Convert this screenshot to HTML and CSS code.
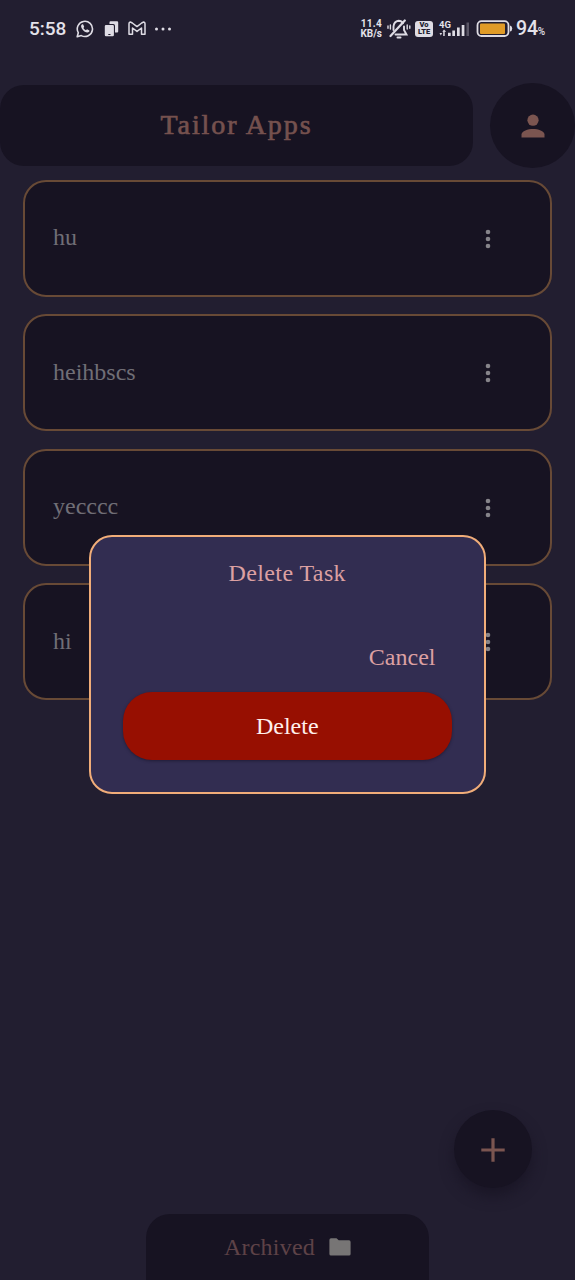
FILE: index.html
```html
<!DOCTYPE html>
<html lang="en">
<head>
<meta charset="utf-8">
<title>Tailor Apps</title>
<link rel="stylesheet" href="styles.css">
</head>
<body>
<div class="app">
  <div class="status">
    <span class="clock">5:58</span>
    <svg class="ic-whatsapp" width="18" height="18" viewBox="0 0 18 18" fill="none" stroke="#dedce4"><path d="M1.200 16.800l1.100-4.100a7.600 7.600 0 1 1 3 2.900z" stroke-width="1.600" stroke-linejoin="round"/><path d="M6.100 4.300c-1.700 1-1.100 3.400.4 5.200 1.700 2.100 4.500 4 6.300 2.600.9-.7.8-1.500.2-1.800l-1.600-.9c-.9-.2-1 .8-1.600.8-1-.3-1.900-1.200-2.300-2.100 0-.5.800-.8.600-1.500L7.200 4.600c-.2-.4-.6-.5-1.100-.3z" fill="#dedce4" stroke="none"/></svg>
    <svg class="ic-devices" width="15" height="16" viewBox="0 0 15 16" fill="#dedce4"><path d="M5.500 1.200Q5.500.2 6.500.2H13q1.200 0 1.200 1.200V10.500q0 1-1 1H11V4.800Q11 3 9.300 3H5.500z"/><path d="M2 4h6.800q1.100 0 1.100 1.100v9q0 1.200-1.200 1.200H2q-1.200 0-1.200-1.200V5.200Q.8 4 2 4zm2.300 9.100v1h2.200v-1z" fill-rule="evenodd"/></svg>
    <svg class="ic-mail" width="18" height="15" viewBox="0 0 18 15" fill="none" stroke="#dedce4" stroke-width="1.500" stroke-linejoin="round"><path d="M1 13.300V3q0-2 1.700-1.900L4.300 2 9 5.600 13.700 2l1.600-.9Q17 1 17 3v10.300h-3.500V7L9 10.400 4.500 7v6.300z"/></svg>
    <svg class="ic-more" width="18" height="4" viewBox="0 0 18 4" fill="#dedce4"><circle cx="2.500" cy="2" r="1.500"/><circle cx="9" cy="2" r="1.500"/><circle cx="15.500" cy="2" r="1.500"/></svg>
    <span class="spacer"></span>
    <span class="speed"><span>11.4</span><span>KB/s</span></span>
    <svg class="ic-mute" width="24" height="20" viewBox="0 0 24 20" fill="none" stroke="#dedce4" stroke-width="1.900" stroke-linecap="round"><path d="M6.500 11V7.500Q7 2.500 11.500 1.800q3.200 0 4.500 2.400M17 7.500v3.500l2.500 4.500H8.500"/><path d="M3.500 17L17.800 1.500" stroke-width="2.200"/><path d="M10.500 18.500h3" stroke-width="2"/><path d="M3.400 6v4M1 7v2.200M20.200 6v4M22.800 7v2.200" stroke-width="1.400"/></svg>
    <span class="volte"><span>Vo</span><span>LTE</span></span>
    <span class="signal"><span class="net">4G</span>
      <svg width="31" height="16" viewBox="0 0 31 16" fill="#dedce4"><path d="M.5 12h2.600l-1.300 2.500zM3.300 10.800l1.700-2.300 2.200 2.300H5.700V15H4.200v-4.200zM9 11.700h2.700V15H9zM13.300 9.500H16V15h-2.700zM18 6.500h2.700V15H18zM22.700 4h2.700v11h-2.700z"/><path d="M27.500 1.500h2.500V15h-2.500z" opacity=".3"/></svg>
    </span>
    <svg class="ic-battery" width="37" height="18" viewBox="0 0 37 18"><rect x="1.500" y="1.200" width="31" height="14.800" rx="4" fill="none" stroke="#dedce4" stroke-width="1.800"/><rect x="4" y="3.400" width="25" height="10.500" rx="1" fill="#e09b27"/><path d="M34 5.500q2.200.4 2.200 3T34 11.500z" fill="#dedce4"/></svg>
    <span class="percent">94<small>%</small></span>
  </div>

  <div class="header">
    <div class="title">Tailor Apps</div>
    <div class="profile"><svg width="24" height="24" viewBox="0 0 24 24" fill="#7b5550"><circle cx="12" cy="6.200" r="5.600"/><path d="M.5 23.500v-2.900C.5 17 7 15 12 15s11.500 2 11.500 5.600v2.900z"/></svg></div>
  </div>

  <div class="tasks">
    <div class="task"><span>hu</span><svg class="dots" width="6" height="20" viewBox="0 0 6 20"><circle cx="3" cy="3" r="2.300"/><circle cx="3" cy="10" r="2.300"/><circle cx="3" cy="17" r="2.300"/></svg></div>
    <div class="task"><span>heihbscs</span><svg class="dots" width="6" height="20" viewBox="0 0 6 20"><circle cx="3" cy="3" r="2.300"/><circle cx="3" cy="10" r="2.300"/><circle cx="3" cy="17" r="2.300"/></svg></div>
    <div class="task"><span>yecccc</span><svg class="dots" width="6" height="20" viewBox="0 0 6 20"><circle cx="3" cy="3" r="2.300"/><circle cx="3" cy="10" r="2.300"/><circle cx="3" cy="17" r="2.300"/></svg></div>
    <div class="task"><span>hi</span><svg class="dots" width="6" height="20" viewBox="0 0 6 20"><circle cx="3" cy="3" r="2.300"/><circle cx="3" cy="10" r="2.300"/><circle cx="3" cy="17" r="2.300"/></svg></div>
  </div>

  <div class="archived"><span>Archived</span><svg width="22" height="18" viewBox="0 0 22 18" fill="#777575"><path d="M2 .3h5.500L9.700 2.300H20q1.600 0 1.600 1.600V16q0 1.500-1.600 1.500H2Q.4 17.500.4 16V1.900Q.4.300 2 .3z"/></svg></div>

  <div class="fab"><svg width="24" height="24" viewBox="0 0 24 24" stroke="#7b5550" stroke-width="3.200"><path d="M12 .3v23.400M.3 12h23.400"/></svg></div>

  <div class="dialog">
    <div class="dialog-title">Delete Task</div>
    <div class="cancel">Cancel</div>
    <div class="delete">Delete</div>
  </div>
</div>
</body>
</html>
```
FILE: styles.css
```css
* { box-sizing: border-box; }
body { margin: 0; background: #221e30; }
svg { display: block; flex: none; }
.app {
  position: relative;
  display: flex;
  flex-direction: column;
  width: 575px;
  height: 1280px;
  overflow: hidden;
  background: #221e30;
  font-family: "Liberation Serif", serif;
  font-size: 24px;
  line-height: 28px;
}
.status {
  display: flex;
  align-items: center;
  height: 57px;
  padding: 0 29px;
  color: #e4e2ea;
  font-family: Roboto, sans-serif;
}
.clock { width: 47px; font-size: 19px; font-weight: 500; margin-top: 1px; }
.ic-devices { margin-left: 10px; }
.ic-mail { margin-left: 9px; }
.ic-more { margin-left: 8px; }
.spacer { flex: 1; }
.speed { display: flex; flex-direction: column; width: 22px; margin-right: 5px; align-items: flex-end; font-size: 10px; font-weight: 700; line-height: 9.500px; white-space: nowrap; }
.speed span:first-child { letter-spacing: .3px; }
.volte {
  display: flex;
  flex-direction: column;
  align-items: center;
  justify-content: center;
  width: 18px;
  height: 16px;
  margin: 0 6px 0 4px;
  border-radius: 3px;
  background: #dedce4;
  color: #221e30;
  font-size: 7.500px;
  font-weight: 900;
  line-height: 6.500px;
}
.signal { position: relative; width: 31px; margin-right: 6px; }
.net { position: absolute; left: 0; top: -1px; font-size: 9.500px; font-weight: 700; line-height: 9px; }
.percent { width: 30px; margin: 3px 0 0 3px; font-size: 19.500px; font-weight: 500; white-space: nowrap; letter-spacing: -.2px; }
.percent small { font-size: 10px; }
.header { display: flex; align-items: center; gap: 17px; margin-top: 26px; height: 85px; }
.title {
  width: 473px;
  height: 81px;
  border-radius: 24px;
  background: #171322;
  color: #75514e;
  font-size: 28px;
  -webkit-text-stroke: .7px #75514e;
  letter-spacing: 1.900px;
  line-height: 79px;
  text-align: center;
}
.profile, .fab { display: flex; align-items: center; justify-content: center; border-radius: 50%; background: #171322; }
.profile { width: 85px; height: 85px; flex: none; }
.tasks { display: flex; flex-direction: column; gap: 17.500px; padding: 11.500px 23px 0 22.500px; }
.task {
  display: flex;
  align-items: center;
  justify-content: space-between;
  height: 117px;
  padding: 0 59.500px 2px 28.500px;
  border: 2px solid #684a36;
  border-radius: 23px;
  background: #171322;
  color: #706e76;
}
.dots { fill: #86848a; margin-top: 3px; }
.archived {
  display: flex;
  justify-content: center;
  gap: 14px;
  align-items: center;
  width: 283px;
  height: 66px;
  margin: auto auto 0 146px;
  padding-bottom: 1px;
  border-radius: 24px 24px 0 0;
  background: #171322;
  color: #5e4247;
  letter-spacing: .2px;
}
.archived svg { margin-top: 1px; }
.fab {
  position: absolute;
  left: 454px;
  top: 1110px;
  width: 78px;
  height: 78px;
  padding-top: 2px;
  box-shadow: 0 8px 14px #1a1626;
}
.dialog {
  position: absolute;
  left: 89px;
  top: 535px;
  display: flex;
  flex-direction: column;
  width: 396.500px;
  height: 259px;
  padding: 22px 32px 0;
  border: 2px solid #f1ad79;
  border-radius: 23px;
  background: #322d51;
  color: #dca0a2;
}
.dialog-title { text-align: center; letter-spacing: .4px; }
.cancel { align-self: flex-end; margin: 56px 16px 21px 0; }
.delete {
  height: 68px;
  border-radius: 29px;
  background: #970f01;
  color: #fff0ed;
  line-height: 68px;
  text-align: center;
  box-shadow: 0 1px 3px #211d38;
}
```
